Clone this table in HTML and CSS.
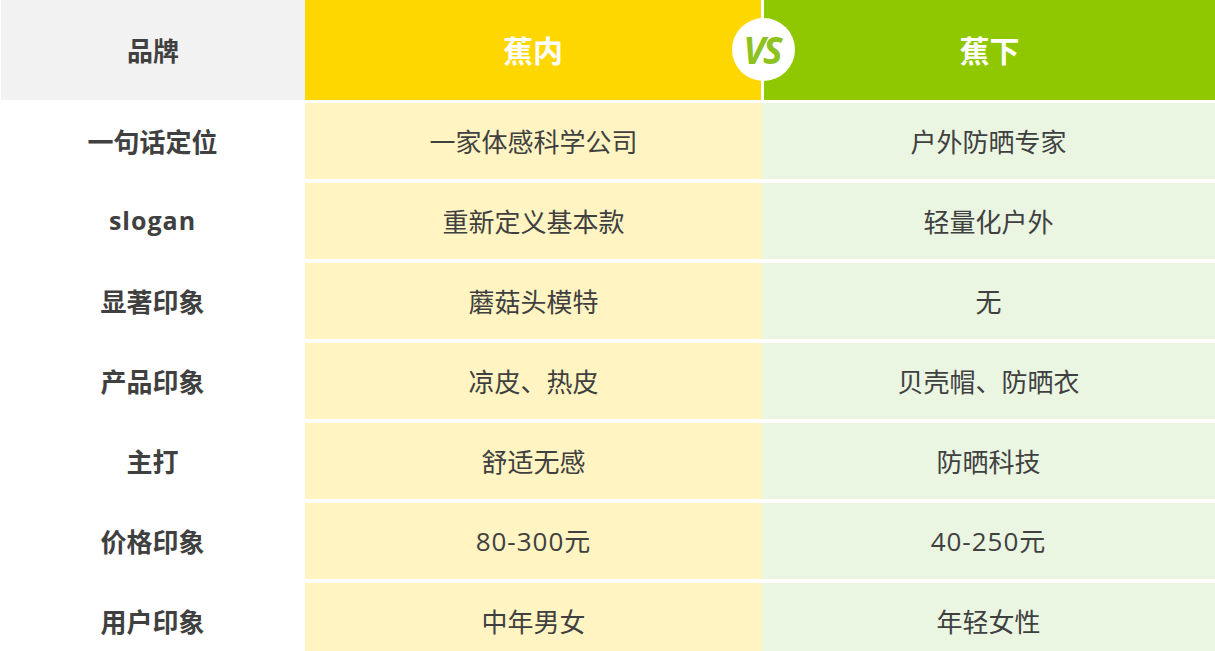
FILE: index.html
```html
<!DOCTYPE html>
<html lang="zh-CN">
<head>
<meta charset="utf-8">
<title>蕉内 VS 蕉下</title>
<link rel="stylesheet" href="styles.css">
</head>
<body>
<div class="table">
  <div class="head">
    <div class="h-label">品牌</div>
    <div class="h-a">蕉内</div>
    <div class="h-b">蕉下</div>
    <div class="vs">VS</div>
  </div>
  <div class="rows">
    <div class="label">一句话定位</div><div class="ca">一家体感科学公司</div><div class="cb">户外防晒专家</div>
    <div class="label latin">slogan</div><div class="ca">重新定义基本款</div><div class="cb">轻量化户外</div>
    <div class="label">显著印象</div><div class="ca">蘑菇头模特</div><div class="cb">无</div>
    <div class="label">产品印象</div><div class="ca">凉皮、热皮</div><div class="cb">贝壳帽、防晒衣</div>
    <div class="label">主打</div><div class="ca">舒适无感</div><div class="cb">防晒科技</div>
    <div class="label">价格印象</div><div class="ca num">80-300元</div><div class="cb num">40-250元</div>
    <div class="label">用户印象</div><div class="ca">中年男女</div><div class="cb">年轻女性</div>
  </div>
</div>
</body>
</html>
```
FILE: styles.css
```css
html, body {
  margin: 0;
  padding: 0;
  background: #ffffff;
}
body {
  font-family: "Noto Sans CJK SC", "Noto Sans", sans-serif;
  color: #404040;
  overflow: hidden;
}
.table {
  width: 1215px;
  display: flex;
  flex-direction: column;
}
.head {
  position: relative;
  display: grid;
  grid-template-columns: 304px 456px 1fr;
  margin-left: 1px;
  height: 100px;
  margin-bottom: 3px;
}
.head > div {
  display: flex;
  align-items: center;
  justify-content: center;
  padding-bottom: 2px;
  box-sizing: border-box;
}
.h-label {
  background: #f2f2f2;
  font-size: 26px;
  font-weight: 700;
  color: #404040;
}
.h-a {
  background: #ffd700;
  color: #ffffff;
  font-size: 30px;
  font-weight: 700;
}
.h-b {
  background: #8fc800;
  border-left: 3px solid #ffffff;
  color: #ffffff;
  font-size: 30px;
  font-weight: 700;
}
.head .vs {
  position: absolute;
  left: 731px;
  top: 18px;
  width: 63px;
  height: 63px;
  border-radius: 50%;
  background: #ffffff;
  color: #8dc21f;
  font-family: "Open Sans", "Noto Sans", sans-serif;
  font-style: italic;
  font-weight: 700;
  font-size: 37px;
  letter-spacing: -2px;
  padding: 0 3px 0 0;
  box-sizing: border-box;
}
.rows {
  display: grid;
  grid-template-columns: 305px 457px 1fr;
  grid-auto-rows: 76px;
  row-gap: 4px;
}
.rows > div {
  display: flex;
  align-items: center;
  justify-content: center;
  font-size: 26px;
  padding-bottom: 2px;
  box-sizing: border-box;
}
.rows > .num {
  font-family: "Open Sans", "Noto Sans CJK SC", sans-serif;
  font-size: 26px;
  letter-spacing: 1px;
}
.label {
  font-weight: 700;
  color: #404040;
}
.label.latin {
  font-family: "Open Sans", "Noto Sans", sans-serif;
  font-size: 25px;
  letter-spacing: 1px;
}
.ca {
  background: #fff4c2;
}
.cb {
  background: #eaf5e2;
}
```
